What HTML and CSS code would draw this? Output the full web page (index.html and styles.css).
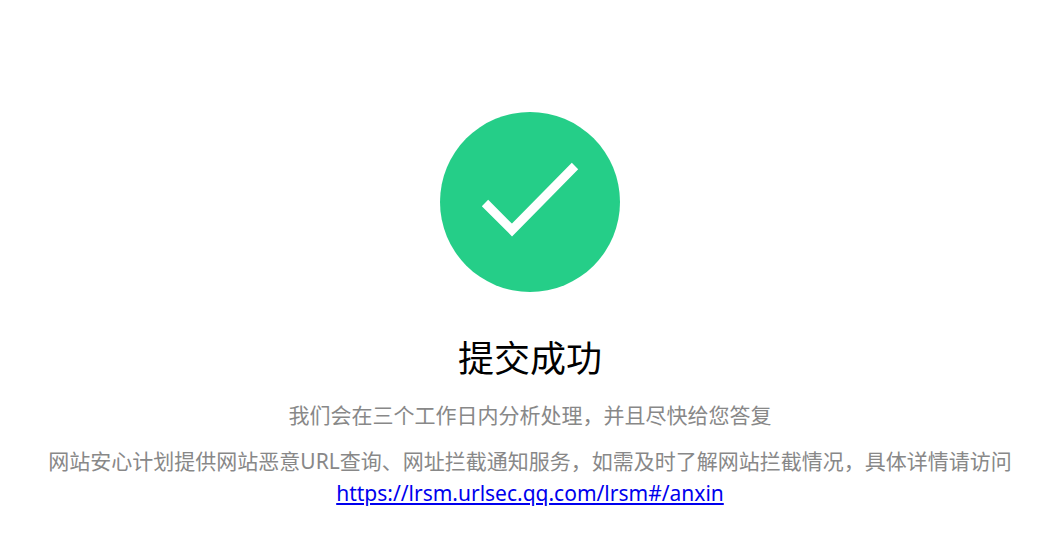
FILE: index.html
```html
<!DOCTYPE html>
<html lang="zh-CN">
<head>
  <meta charset="UTF-8">
  <meta name="viewport" content="width=device-width, initial-scale=1.0">
  <title>提交成功</title>
  <link rel="stylesheet" href="styles.css">
</head>
<body>
  <main class="result">
    <svg class="result-icon" viewBox="0 0 180 180" aria-hidden="true">
      <circle cx="90" cy="90" r="90" fill="#25ce88"/>
      <path d="M45 91L72 118L135 54" fill="none" stroke="#fff" stroke-width="9"/>
    </svg>
    <h1 class="result-title">提交成功</h1>
    <p class="result-text">我们会在三个工作日内分析处理，并且尽快给您答复</p>
    <p class="result-text">网站安心计划提供网站恶意URL查询、网址拦截通知服务，如需及时了解网站拦截情况，具体详情请访问
      <a class="result-link" href="https://lrsm.urlsec.qq.com/lrsm#/anxin">https://lrsm.urlsec.qq.com/lrsm#/anxin</a>
    </p>
  </main>
</body>
</html>
```
FILE: styles.css
```css
body {
  margin: 0;
  background: #fff;
  color: #000;
  font-family: "Noto Sans", "Noto Sans CJK SC", sans-serif;
}

.result {
  display: flex;
  flex-direction: column;
  align-items: center;
  padding: 112px 24px 32px 39px;
  text-align: center;
}

.result-icon {
  width: 180px;
  height: 180px;
}

.result-title {
  margin: 40px 0 13px;
  font-size: 36px;
  font-weight: 400;
  line-height: 54px;
}

.result-text {
  margin: 0 0 14px;
  color: #888;
  font-size: 21px;
  line-height: 32px;
}

.result-link {
  color: #00e;
}
```
